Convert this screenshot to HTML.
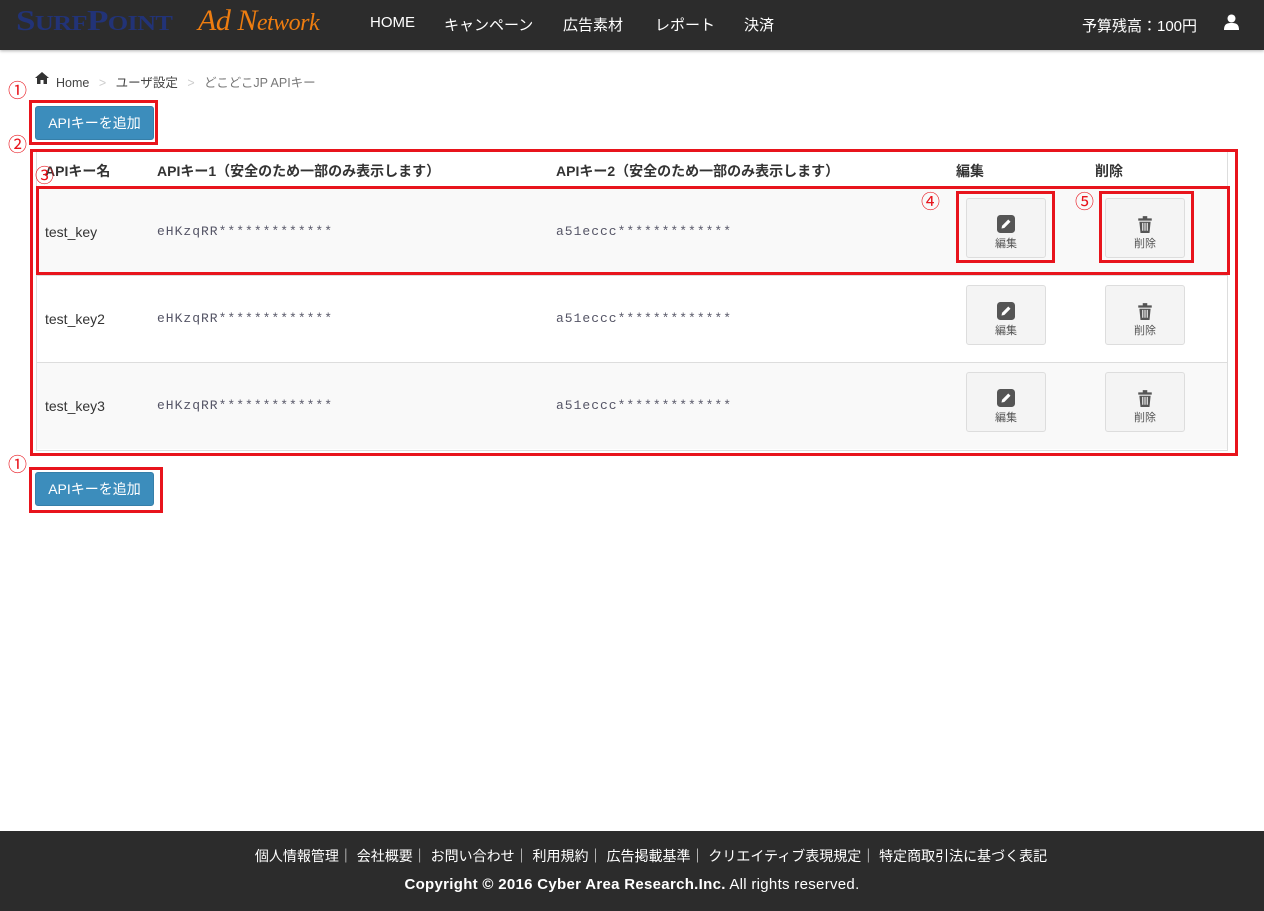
<!DOCTYPE html>
<html><head><meta charset="utf-8"><style>
*{margin:0;padding:0;box-sizing:border-box}
body{width:1264px;height:911px;position:relative;background:#fff;font-family:"Liberation Sans","Noto Sans CJK JP",sans-serif;color:#333;font-size:14px;overflow:hidden}
.a{position:absolute;white-space:nowrap}
.hdr{position:absolute;left:0;top:0;width:1264px;height:50px;background:#2c2c2c;box-shadow:0 1px 3px rgba(0,0,0,.3)}
.nav{color:#fff;font-size:15px;top:14px}
.rb{position:absolute;border:3px solid #e8141c}
.num{position:absolute;color:#e8141c;font-size:19px;font-family:"Noto Sans CJK JP",sans-serif;line-height:1}
.btn{position:absolute;background:#3c8dbc;border:1px solid #367fa9;border-radius:3px;color:#fff;font-size:14px;text-align:center;line-height:32px}
.row{position:absolute;left:37px;width:1190px;height:87px;border-top:1px solid #ddd}
.td{position:absolute;font-size:14px;color:#333}
.key{position:absolute;font-size:13px;color:#556;font-family:"Liberation Mono",monospace;letter-spacing:1px}
.ib{position:absolute;width:80px;height:60px;background:#f4f4f4;border:1px solid #ddd;border-radius:3px;text-align:center;font-size:11px;color:#555}
.ib .ic{display:block;margin:16px auto 2px;width:18px;height:18px}
.ft{position:absolute;left:0;top:831px;width:1264px;height:80px;background:#2c2c2c;color:#fff;text-align:center}
</style></head><body>
<div class="hdr">
 <div class="a" style="left:16px;top:6px;font-family:'Liberation Serif',serif;font-weight:bold;color:#223377;font-size:28px;transform:scaleX(1.25);transform-origin:0 0;letter-spacing:-0.5px">S<span style="font-size:21px">URF</span>P<span style="font-size:21px">OINT</span></div>
 <div class="a" style="left:198px;top:4px;font-family:'Liberation Serif',serif;font-style:italic;color:#ee7d10;font-size:30px;letter-spacing:-0.5px">Ad N<span style="font-size:24px">etwork</span></div>
 <div class="a nav" style="left:370px">HOME</div>
 <div class="a nav" style="left:444px">キャンペーン</div>
 <div class="a nav" style="left:563px">広告素材</div>
 <div class="a nav" style="left:655px">レポート</div>
 <div class="a nav" style="left:744px">決済</div>
 <div class="a" style="left:1082px;top:15px;color:#fff;font-size:15px">予算残高：100円</div>
 <svg class="a" style="left:1224px;top:14px" width="15" height="16" viewBox="0 0 15 16"><circle cx="7.5" cy="4.5" r="4" fill="#fff"/><path d="M0 16 C0 10 3 9 7.5 9 S15 10 15 16Z" fill="#fff"/></svg>
</div>
<svg class="a" style="left:35px;top:72px" width="14" height="12" viewBox="0 0 14 12"><path d="M7 0 L14 6 L12 6 L12 12 L8.5 12 L8.5 8 L5.5 8 L5.5 12 L2 12 L2 6 L0 6Z" fill="#333"/></svg>
<div class="a" style="left:56px;top:72px;font-size:12.5px;color:#444">Home <span style="color:#ccc;margin:0 6px">&gt;</span> ユーザ設定 <span style="color:#ccc;margin:0 6px">&gt;</span> <span style="color:#777">どこどこJP APIキー</span></div>

<div class="num" style="left:8px;top:80px">①</div>
<div class="rb" style="left:29px;top:100px;width:129px;height:45px"></div>
<div class="btn" style="left:35px;top:106px;width:119px;height:34px">APIキーを追加</div>

<div class="num" style="left:8px;top:134px">②</div>
<div style="position:absolute;left:36px;top:151px;width:1192px;height:300px;border:1px solid #ddd;border-top:none"></div>
<div class="td" style="left:45px;top:161px;font-weight:bold">APIキー名</div>
<div class="td" style="left:157px;top:161px;font-weight:bold">APIキー1（安全のため一部のみ表示します）</div>
<div class="td" style="left:556px;top:161px;font-weight:bold">APIキー2（安全のため一部のみ表示します）</div>
<div class="td" style="left:956px;top:161px;font-weight:bold">編集</div>
<div class="td" style="left:1095px;top:161px;font-weight:bold">削除</div>

<div class="row" style="top:187px;background:#f9f9f9;border-top:2px solid #ddd"></div>
<div class="row" style="top:275px;background:#fff"></div>
<div class="row" style="top:362px;background:#f9f9f9"></div>

<div class="td" style="left:45px;top:224px">test_key</div>
<div class="td" style="left:45px;top:311px">test_key2</div>
<div class="td" style="left:45px;top:398px">test_key3</div>
<div class="key" style="left:157px;top:224px">eHKzqRR*************</div>
<div class="key" style="left:157px;top:311px">eHKzqRR*************</div>
<div class="key" style="left:157px;top:398px">eHKzqRR*************</div>
<div class="key" style="left:556px;top:224px">a51eccc*************</div>
<div class="key" style="left:556px;top:311px">a51eccc*************</div>
<div class="key" style="left:556px;top:398px">a51eccc*************</div>

<div class="ib" style="left:966px;top:198px"><svg class="ic" viewBox="0 0 16 16"><rect width="16" height="16" rx="3" fill="#555"/><path d="M4 12 L4.5 9.5 L10 4 L12 6 L6.5 11.5Z" fill="#fff"/></svg>編集</div>
<div class="ib" style="left:1105px;top:198px"><svg class="ic" viewBox="0 0 16 16"><path d="M2 3h12v2H2z M6 1h4v2H6z M3 6h10l-1 10H4z" fill="#555"/><path d="M6 7v7M8 7v7M10 7v7" stroke="#f4f4f4" stroke-width="1"/></svg>削除</div>
<div class="ib" style="left:966px;top:285px"><svg class="ic" viewBox="0 0 16 16"><rect width="16" height="16" rx="3" fill="#555"/><path d="M4 12 L4.5 9.5 L10 4 L12 6 L6.5 11.5Z" fill="#fff"/></svg>編集</div>
<div class="ib" style="left:1105px;top:285px"><svg class="ic" viewBox="0 0 16 16"><path d="M2 3h12v2H2z M6 1h4v2H6z M3 6h10l-1 10H4z" fill="#555"/><path d="M6 7v7M8 7v7M10 7v7" stroke="#f4f4f4" stroke-width="1"/></svg>削除</div>
<div class="ib" style="left:966px;top:372px"><svg class="ic" viewBox="0 0 16 16"><rect width="16" height="16" rx="3" fill="#555"/><path d="M4 12 L4.5 9.5 L10 4 L12 6 L6.5 11.5Z" fill="#fff"/></svg>編集</div>
<div class="ib" style="left:1105px;top:372px"><svg class="ic" viewBox="0 0 16 16"><path d="M2 3h12v2H2z M6 1h4v2H6z M3 6h10l-1 10H4z" fill="#555"/><path d="M6 7v7M8 7v7M10 7v7" stroke="#f4f4f4" stroke-width="1"/></svg>削除</div>

<div class="rb" style="left:30px;top:149px;width:1208px;height:307px"></div>
<div class="num" style="left:35px;top:165px">③</div>
<div class="rb" style="left:36px;top:186px;width:1194px;height:89px"></div>
<div class="num" style="left:921px;top:191px">④</div>
<div class="rb" style="left:956px;top:191px;width:99px;height:72px"></div>
<div class="num" style="left:1075px;top:191px">⑤</div>
<div class="rb" style="left:1099px;top:191px;width:95px;height:72px"></div>

<div class="num" style="left:8px;top:454px">①</div>
<div class="rb" style="left:29px;top:467px;width:134px;height:46px"></div>
<div class="btn" style="left:35px;top:472px;width:119px;height:34px">APIキーを追加</div>

<div class="ft">
 <div style="position:absolute;top:15px;left:0;width:100%;padding-left:38px;font-size:14px">個人情報管理｜ 会社概要｜ お問い合わせ｜ 利用規約｜ 広告掲載基準｜ クリエイティブ表現規定｜ 特定商取引法に基づく表記</div>
 <div style="position:absolute;top:45px;width:100%;font-size:15px;letter-spacing:0.3px"><b>Copyright © 2016 Cyber Area Research.Inc.</b> All rights reserved.</div>
</div>
</body></html>
